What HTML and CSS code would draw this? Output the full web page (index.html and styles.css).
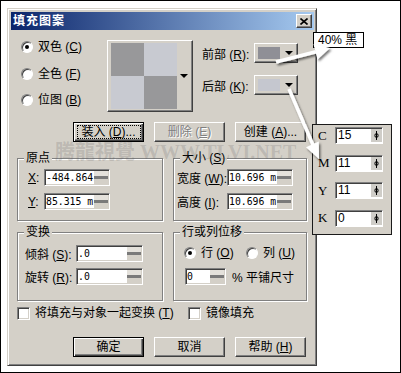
FILE: index.html
```html
<!DOCTYPE html>
<html lang="zh-CN">
<head>
  <meta charset="UTF-8" />
  <title>填充图案</title>
  <link rel="stylesheet" href="styles.css">
</head>
<body>
  <div class="frame">
    <div class="dialog">
      <div class="titlebar">
        <span class="title">填充图案</span>
        <span class="close">
          <svg width="8" height="7" viewBox="0 0 8 7"><path d="M0.5 0.5 L7.5 6.5 M7.5 0.5 L0.5 6.5" stroke="#000" stroke-width="1.6"/></svg>
        </span>
      </div>

      <div class="content">
        <!-- mode, pattern, colours -->
        <div class="top">
          <div class="modes">
            <div class="radio"><span class="dot on"></span><span>双色 (<u>C</u>)</span></div>
            <div class="radio"><span class="dot"></span><span>全色 (<u>F</u>)</span></div>
            <div class="radio"><span class="dot"></span><span>位图 (<u>B</u>)</span></div>
          </div>
          <div class="pattern">
            <div class="checker"><i class="dark"></i><i></i><i></i><i class="dark"></i></div>
            <span class="drop"></span>
          </div>
          <div class="colors">
            <div class="color-row">
              <span class="clabel">前部 (<u>R</u>):</span>
              <span class="picker"><i class="swatch front"></i><span class="drop"></span></span>
            </div>
            <div class="color-row">
              <span class="clabel">后部 (<u>K</u>):</span>
              <span class="picker"><i class="swatch back"></i><span class="drop"></span></span>
            </div>
          </div>
        </div>

        <div class="btn-row top-btns">
          <span class="btn default focus"><span>装入 (<u>D</u>)...</span></span>
          <span class="btn disabled"><span>删除 (<u>E</u>)</span></span>
          <span class="btn"><span>创建 (<u>A</u>)...</span></span>
        </div>

        <div class="groups first">
          <div class="group g-left origin">
            <span class="gtitle">原点</span>
            <div class="fields">
              <div class="field-row"><span class="flabel"><u>X</u>:</span><span class="field"><span class="val">-484.864</span><span class="spin"></span></span></div>
              <div class="field-row"><span class="flabel"><u>Y</u>:</span><span class="field"><span class="val">85.315 m</span><span class="spin"></span></span></div>
            </div>
          </div>
          <div class="group g-right size">
            <span class="gtitle">大小 (<u>S</u>)</span>
            <div class="fields">
              <div class="field-row"><span class="flabel">宽度 (<u>W</u>):</span><span class="field"><span class="val">10.696 m</span><span class="spin"></span></span></div>
              <div class="field-row"><span class="flabel">高度 (<u>I</u>):</span><span class="field"><span class="val">10.696 m</span><span class="spin"></span></span></div>
            </div>
          </div>
        </div>

        <div class="groups second">
          <div class="group g-left transform">
            <span class="gtitle">变换</span>
            <div class="fields">
              <div class="field-row"><span class="flabel">倾斜 (<u>S</u>):</span><span class="field wide"><span class="val">.0</span><span class="spin"></span></span></div>
              <div class="field-row"><span class="flabel">旋转 (<u>R</u>):</span><span class="field wide"><span class="val">.0</span><span class="spin"></span></span></div>
            </div>
          </div>
          <div class="group g-right shift">
            <span class="gtitle">行或列位移</span>
            <div class="radio-pair">
              <div class="radio"><span class="dot on"></span><span>行 (<u>O</u>)</span></div>
              <div class="radio"><span class="dot"></span><span>列 (<u>U</u>)</span></div>
            </div>
            <div class="field-row tile">
              <span class="field small"><span class="val">0</span><span class="spin"></span></span>
              <span class="unit">% 平铺尺寸</span>
            </div>
          </div>
        </div>

        <div class="checks">
          <div class="check"><span class="box"></span><span>将填充与对象一起变换 (<u>T</u>)</span></div>
          <div class="check"><span class="box"></span><span>镜像填充</span></div>
        </div>

        <div class="btn-row bottom-btns">
          <span class="btn default">确定</span>
          <span class="btn">取消</span>
          <span class="btn"><span>帮助 (<u>H</u>)</span></span>
        </div>
      </div>
    </div>

    <!-- annotations drawn over the dialog -->
    <div class="watermark">腾龍視覺 WWW.TLVI.NET</div>
    <div class="note">40% 黑</div>
    <div class="cmyk">
      <div class="cmyk-row"><span class="ch">C</span><span class="cfield"><span class="val">15</span><span class="knob"><svg width="11" height="13" viewBox="0 0 11 13"><path d="M5.5 2 V11" stroke="#000"/><ellipse cx="5.5" cy="6.5" rx="1.6" ry="2" fill="none" stroke="#000"/></svg></span></span></div>
      <div class="cmyk-row"><span class="ch">M</span><span class="cfield"><span class="val">11</span><span class="knob"><svg width="11" height="13" viewBox="0 0 11 13"><path d="M5.5 2 V11" stroke="#000"/><ellipse cx="5.5" cy="6.5" rx="1.6" ry="2" fill="none" stroke="#000"/></svg></span></span></div>
      <div class="cmyk-row"><span class="ch">Y</span><span class="cfield"><span class="val">11</span><span class="knob"><svg width="11" height="13" viewBox="0 0 11 13"><path d="M5.5 2 V11" stroke="#000"/><ellipse cx="5.5" cy="6.5" rx="1.6" ry="2" fill="none" stroke="#000"/></svg></span></span></div>
      <div class="cmyk-row"><span class="ch">K</span><span class="cfield"><span class="val">0</span><span class="knob"><svg width="11" height="13" viewBox="0 0 11 13"><path d="M5.5 2 V11" stroke="#000"/><ellipse cx="5.5" cy="6.5" rx="1.6" ry="2" fill="none" stroke="#000"/></svg></span></span></div>
    </div>
    <svg class="arrows" width="401" height="373" viewBox="0 0 401 373">
      <defs>
        <filter id="shadow" x="-30%" y="-30%" width="160%" height="160%">
          <feDropShadow dx="1.5" dy="2" stdDeviation="1.2" flood-color="#000" flood-opacity="0.55"/>
        </filter>
      </defs>
      <g filter="url(#shadow)" fill="#fff">
        <polygon points="275.5,60.3 315.5,50 316.5,53.4 276.5,63.7"/>
        <polygon points="330,48 313.5,44 317.5,59.5"/>
        <polygon points="290.6,88.3 314.6,144.3 311.4,145.7 287.4,89.7"/>
        <polygon points="319,159 318.8,141.5 306,147.3"/>
      </g>
    </svg>
  </div>
</body>
</html>
```

FILE: styles.css
```css
body {
  margin: 0;
  background: #fff;
  font-family: "Liberation Sans", "Noto Sans CJK SC", sans-serif;
  font-size: 12px;
  color: #000;
}
u { text-decoration: underline; text-underline-offset: 1px; }

.frame {
  position: relative;
  width: 401px;
  height: 373px;
  box-sizing: border-box;
  padding: 8px 0 0 7px;
  box-shadow: inset 0 0 0 1px #000;
  overflow: hidden;
}

/* window */
.dialog {
  width: 310px;
  height: 358px;
  box-sizing: border-box;
  background: #d4d0c8;
  border: 1px solid;
  border-color: #d4d0c8 #404040 #404040 #d4d0c8;
  box-shadow: inset 1px 1px #fff, inset -1px -1px #808080;
  padding: 3px 2px 2px 3px;
}
.titlebar {
  height: 18px;
  display: flex;
  align-items: center;
  justify-content: space-between;
  padding: 0 2px;
  background: linear-gradient(to right, #0a246a, #a6caf0);
}
.title {
  color: #fff;
  font-weight: bold;
  letter-spacing: 1px;
  line-height: 18px;
}
.close {
  width: 16px;
  height: 14px;
  box-sizing: border-box;
  background: #d4d0c8;
  border: 1px solid;
  border-color: #fff #404040 #404040 #fff;
  box-shadow: inset -1px -1px #808080;
  display: flex;
  align-items: center;
  justify-content: center;
}
.close svg { display: block; }

.content { padding: 0 6px; }

/* top area */
.top {
  display: flex;
  align-items: flex-start;
  height: 82px;
}
.modes {
  width: 90px;
  box-sizing: border-box;
  padding: 10px 0 0 4px;
  display: flex;
  flex-direction: column;
  gap: 12.5px;
}
.radio {
  display: flex;
  align-items: center;
  gap: 5px;
  height: 14px;
  line-height: 14px;
  white-space: nowrap;
}
.dot {
  position: relative;
  width: 12px;
  height: 12px;
  box-sizing: border-box;
  flex: none;
  border-radius: 50%;
  background: #fff;
  border: 1px solid;
  border-color: #808080 #fff #fff #808080;
  box-shadow: inset 1px 1px #404040;
}
.dot.on::after {
  content: "";
  position: absolute;
  left: 3px;
  top: 3px;
  width: 4px;
  height: 4px;
  border-radius: 50%;
  background: #000;
}

.pattern {
  margin-top: 10px;
  width: 86px;
  height: 72px;
  box-sizing: border-box;
  border: 1px solid;
  border-color: #fff #404040 #404040 #fff;
  box-shadow: inset -1px -1px #808080;
  display: flex;
  align-items: center;
  padding-left: 3px;
  gap: 3px;
}
.checker {
  display: grid;
  grid-template-columns: 33px 33px;
  grid-template-rows: 33px 33px;
}
.checker i { background: #c8cad1; }
.checker i.dark { background: #98989a; }

.drop {
  width: 0;
  height: 0;
  border-left: 4px solid transparent;
  border-right: 4px solid transparent;
  border-top: 4px solid #000;
}

.colors {
  margin: 13px 0 0 9px;
  display: flex;
  flex-direction: column;
  gap: 12px;
}
.color-row { display: flex; align-items: center; }
.clabel { width: 52px; white-space: nowrap; }
.picker {
  width: 44px;
  height: 20px;
  box-sizing: border-box;
  border: 1px solid;
  border-color: #fff #404040 #404040 #fff;
  box-shadow: inset -1px -1px #808080;
  display: flex;
  align-items: center;
  padding-left: 3px;
  gap: 5px;
}
.swatch { display: block; width: 22px; height: 12px; }
.swatch.front { background: #8f8f96; }
.swatch.back { background: #c5c7cf; }

/* push buttons */
.btn-row {
  display: flex;
  gap: 10px;
  padding-left: 56px;
}
.top-btns { margin-top: 10px; }
.bottom-btns { margin-top: 17px; }
.btn {
  position: relative;
  width: 71px;
  height: 20px;
  box-sizing: border-box;
  border: 1px solid;
  border-color: #fff #404040 #404040 #fff;
  box-shadow: inset -1px -1px #808080;
  display: flex;
  align-items: center;
  justify-content: center;
  line-height: 14px;
  white-space: nowrap;
}
.btn.default {
  border-color: #000;
  box-shadow: inset 1px 1px #fff, inset -1px -1px #404040, inset -2px -2px #808080;
}
.btn.focus::after {
  content: "";
  position: absolute;
  inset: 2px 2px 2px 3px;
  border: 1px dotted #000;
}
.btn.disabled {
  color: #808080;
  text-shadow: 1px 1px 0 #fff;
}

/* group boxes */
.groups {
  display: flex;
  gap: 10px;
}
.groups.first { margin-top: 16px; }
.groups.second { margin-top: 11px; }
.group {
  position: relative;
  box-sizing: border-box;
  border: 1px solid #808080;
  box-shadow: inset 1px 1px #fff, 1px 1px #fff;
}
.first .group { height: 63px; }
.second .group { height: 69px; }
.g-left { width: 146px; }
.g-right { width: 134px; }
.gtitle {
  position: absolute;
  top: -7px;
  left: 6px;
  padding: 0 2px;
  background: #d4d0c8;
  line-height: 12px;
  white-space: nowrap;
}

.fields {
  display: flex;
  flex-direction: column;
  gap: 7px;
}
.field-row {
  display: flex;
  align-items: center;
  height: 17px;
}
.flabel { white-space: nowrap; }
.origin { padding: 10px 0 0 10px; }
.origin .flabel { width: 16px; }
.size { padding: 10px 0 0 3px; }
.size .flabel { width: 50px; }
.transform { padding: 12px 0 0 7px; }
.transform .fields { gap: 6px; }
.transform .flabel { width: 51px; }

.field {
  width: 66px;
  height: 17px;
  box-sizing: border-box;
  display: flex;
  background: #fff;
  border: 1px solid;
  border-color: #808080 #fff #fff #808080;
  box-shadow: inset 1px 1px #404040, inset -1px -1px #d4d0c8;
  overflow: hidden;
}
.field.wide { width: 67px; }
.field.small { width: 41px; margin-left: 1px; }
.val {
  flex: 1;
  min-width: 0;
  padding-left: 1px;
  font-family: "DejaVu Sans Mono", monospace;
  font-size: 9.8px;
  line-height: 15px;
  white-space: nowrap;
  overflow: hidden;
}
.spin {
  width: 14px;
  margin: 1px 1px 1px 0;
  flex: none;
  background: linear-gradient(#e4e1db 0 40%, #7a7a7a 40% 62%, #d4d0c8 62%);
}

.shift { padding: 13px 0 0 10px; }
.radio-pair { display: flex; gap: 14px; }
.radio-pair .radio:first-child { width: 48px; }
.tile { margin-top: 8px; gap: 6px; }
.unit { white-space: nowrap; }

/* check boxes */
.checks {
  display: flex;
  margin-top: 6px;
}
.check {
  display: flex;
  align-items: center;
  gap: 5px;
  height: 13px;
  line-height: 13px;
  white-space: nowrap;
}
.check:first-child { width: 171px; }
.box {
  width: 13px;
  height: 13px;
  box-sizing: border-box;
  flex: none;
  background: #fff;
  border: 1px solid;
  border-color: #808080 #fff #fff #808080;
  box-shadow: inset 1px 1px #404040, inset -1px -1px #d4d0c8;
}

/* overlays */
.watermark {
  position: absolute;
  left: 55px;
  top: 140px;
  font-family: "Liberation Serif", "Noto Sans CJK TC", serif;
  font-size: 20px;
  font-weight: bold;
  line-height: 24px;
  color: rgba(90, 90, 90, 0.2);
  white-space: nowrap;
}
.note {
  position: absolute;
  left: 313px;
  top: 32px;
  width: 51px;
  height: 16px;
  box-sizing: border-box;
  border: 1px solid #000;
  background: #fff;
  padding-left: 4px;
  line-height: 14px;
  white-space: nowrap;
}
.cmyk {
  position: absolute;
  left: 312px;
  top: 124px;
  width: 80px;
  height: 111px;
  box-sizing: border-box;
  border: 1px solid #1a1a1a;
  background: #d4d0c8;
  padding: 2px 0 0 5px;
  display: flex;
  flex-direction: column;
  gap: 10.5px;
}
.cmyk-row { display: flex; align-items: center; height: 17px; }
.ch {
  width: 17px;
  font-family: "Liberation Serif", serif;
  font-size: 13px;
}
.cmyk .val {
  padding-left: 2px;
  font-family: "Liberation Sans", sans-serif;
  font-size: 12px;
}
.cfield {
  width: 48px;
  height: 17px;
  box-sizing: border-box;
  display: flex;
  background: #fff;
  border: 1px solid;
  border-color: #808080 #fff #fff #808080;
  box-shadow: inset 1px 1px #404040;
}
.knob {
  width: 11px;
  flex: none;
  margin: 1px 0;
  background: #cfcdc8;
  display: flex;
  align-items: center;
}
.knob svg { display: block; }
.arrows {
  position: absolute;
  left: 0;
  top: 0;
  pointer-events: none;
}
```
